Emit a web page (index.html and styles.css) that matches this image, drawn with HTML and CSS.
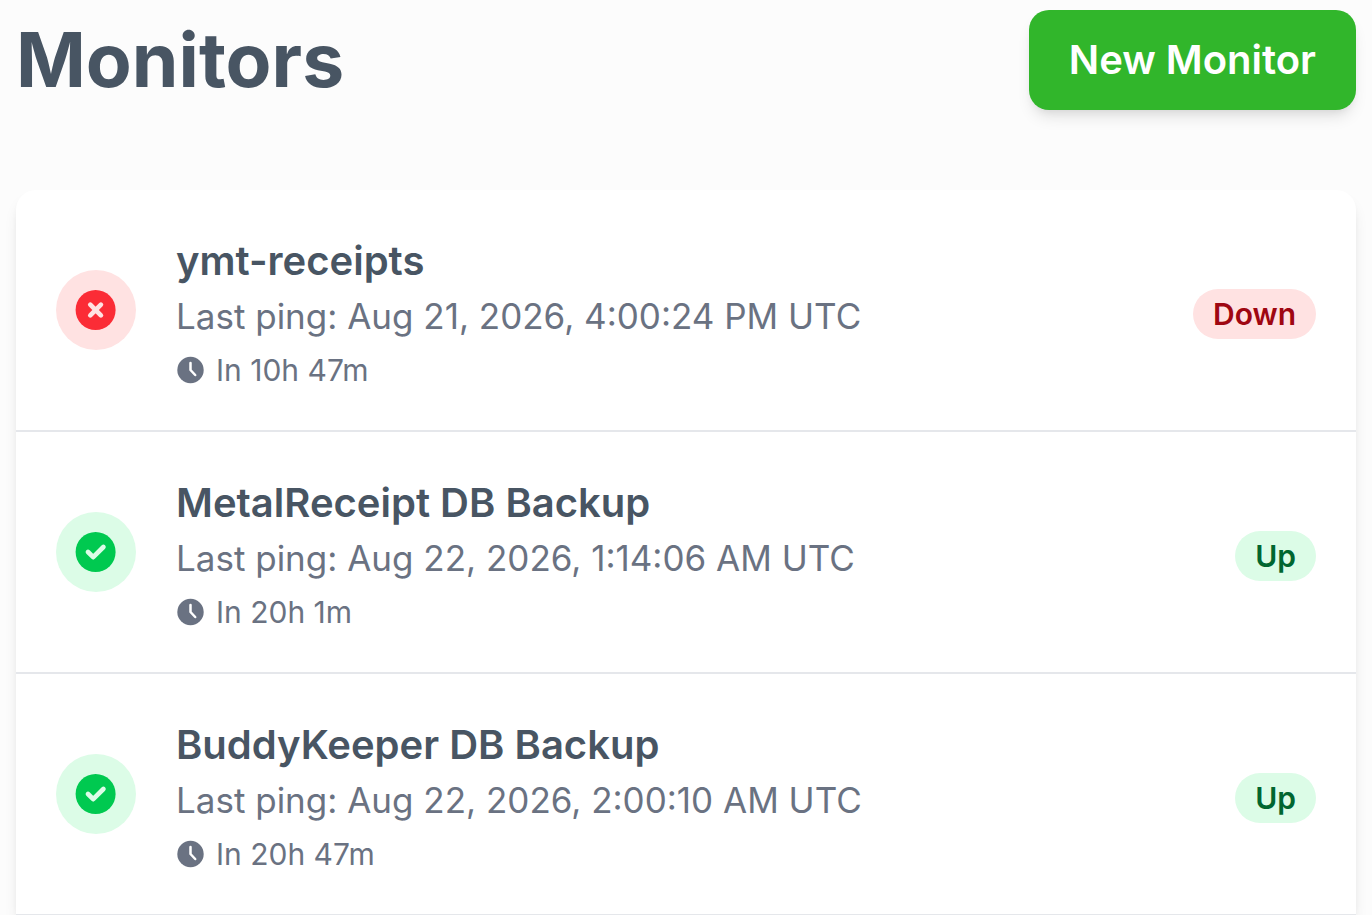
FILE: index.html
```html
<!DOCTYPE html>
<html lang="en">
<head>
  <meta charset="UTF-8">
  <meta name="viewport" content="width=device-width, initial-scale=1.0">
  <title>Monitors</title>
  <link rel="stylesheet" href="styles.css">
</head>
<body>
  <!-- Shared icons -->
  <svg class="sprite" aria-hidden="true">
    <symbol id="icon-down" viewBox="0 0 40 40">
      <circle cx="19.6" cy="20" r="20" fill="#fb2c36"/>
      <path d="M14.3 14.7L24.9 25.3M24.9 14.7L14.3 25.3" fill="none" stroke="#ffe2e2" stroke-width="4.7" stroke-linecap="round"/>
    </symbol>
    <symbol id="icon-up" viewBox="0 0 40 40">
      <circle cx="19.6" cy="20" r="20" fill="#00c950"/>
      <path d="M12 20L17.2 25.2L27.4 15" fill="none" stroke="#dcfce7" stroke-width="4.7" stroke-linecap="round" stroke-linejoin="round"/>
    </symbol>
    <symbol id="icon-clock" viewBox="0 0 30 30">
      <circle cx="14.5" cy="15" r="13.2" fill="#6a7282"/>
      <path d="M14.5 8V15L19.2 20" fill="none" stroke="#fff" stroke-width="2.5" stroke-linecap="round" stroke-linejoin="round"/>
    </symbol>
  </svg>

  <header class="page-header">
    <h1>Monitors</h1>
    <button type="button" class="new-monitor">New Monitor</button>
  </header>

  <ul class="monitor-list">
    <li class="monitor">
      <span class="status status-down"><svg class="status-icon"><use href="#icon-down"/></svg></span>
      <div class="details">
        <h2>ymt-receipts</h2>
        <p class="last-ping">Last ping: Aug 21, 2026, 4:00:24 PM UTC</p>
        <p class="next-ping"><svg class="clock"><use href="#icon-clock"/></svg>In 10h 47m</p>
      </div>
      <span class="badge badge-down">Down</span>
    </li>
    <li class="monitor">
      <span class="status status-up"><svg class="status-icon"><use href="#icon-up"/></svg></span>
      <div class="details">
        <h2>MetalReceipt DB Backup</h2>
        <p class="last-ping">Last ping: Aug 22, 2026, 1:14:06 AM UTC</p>
        <p class="next-ping"><svg class="clock"><use href="#icon-clock"/></svg>In 20h 1m</p>
      </div>
      <span class="badge badge-up">Up</span>
    </li>
    <li class="monitor">
      <span class="status status-up"><svg class="status-icon"><use href="#icon-up"/></svg></span>
      <div class="details">
        <h2>BuddyKeeper DB Backup</h2>
        <p class="last-ping">Last ping: Aug 22, 2026, 2:00:10 AM UTC</p>
        <p class="next-ping"><svg class="clock"><use href="#icon-clock"/></svg>In 20h 47m</p>
      </div>
      <span class="badge badge-up">Up</span>
    </li>
  </ul>
</body>
</html>
```

FILE: styles.css
```css
* {
  box-sizing: border-box;
}
body {
  margin: 0;
  padding: 10px 16px 0;
  background-color: #fcfcfc;
  color: #485563;
  font-family: Inter, "Liberation Sans", sans-serif;
}
h1, h2, p {
  margin: 0;
}
.sprite {
  display: none;
}
.page-header {
  display: flex;
  justify-content: space-between;
  align-items: center;
  margin-bottom: 80px;
}
h1 {
  font-size: 75px;
  line-height: 90px;
  font-weight: 700;
}
.new-monitor {
  padding: 20px 40px;
  border: none;
  border-radius: 20px;
  background-color: #31b62b;
  color: #fff;
  font-family: inherit;
  font-size: 40px;
  line-height: 60px;
  font-weight: 600;
  cursor: pointer;
  box-shadow: 0 10px 15px -3px rgba(0, 0, 0, 0.1), 0 5px 10px -5px rgba(0, 0, 0, 0.1);
}
.monitor-list {
  list-style: none;
  margin: 0;
  padding: 0;
  border-radius: 20px 20px 0 0;
  background-color: #fff;
  box-shadow: 0 10px 15px -3px rgba(0, 0, 0, 0.1), 0 5px 10px -5px rgba(0, 0, 0, 0.1);
}
.monitor {
  display: flex;
  align-items: center;
  gap: 40px;
  padding: 40px;
  border-bottom: 2px solid #e5e7eb;
}
.status {
  display: flex;
  align-items: center;
  justify-content: center;
  width: 80px;
  height: 80px;
  border-radius: 50%;
}
.status-down {
  background-color: #ffe2e2;
}
.status-up {
  background-color: #dcfce7;
}
.status-icon {
  width: 40px;
  height: 40px;
  overflow: visible;
}
.status-icon use,
symbol {
  overflow: visible;
}
.details {
  flex: 1;
}
h2 {
  font-size: 40px;
  line-height: 62px;
  font-weight: 600;
}
.last-ping {
  color: #6a7282;
  font-size: 35px;
  line-height: 48px;
}
.next-ping {
  display: flex;
  align-items: center;
  gap: 10px;
  margin-top: 10px;
  color: #6a7282;
  font-size: 30px;
  line-height: 40px;
}
.clock {
  width: 30px;
  height: 30px;
}
.badge {
  margin-top: 8px;
  padding: 5px 20px;
  border-radius: 25px;
  font-size: 30px;
  line-height: 40px;
  font-weight: 600;
}
.badge-down {
  background-color: #ffe2e2;
  color: #9f0712;
}
.badge-up {
  background-color: #dcfce7;
  color: #016630;
}
```
